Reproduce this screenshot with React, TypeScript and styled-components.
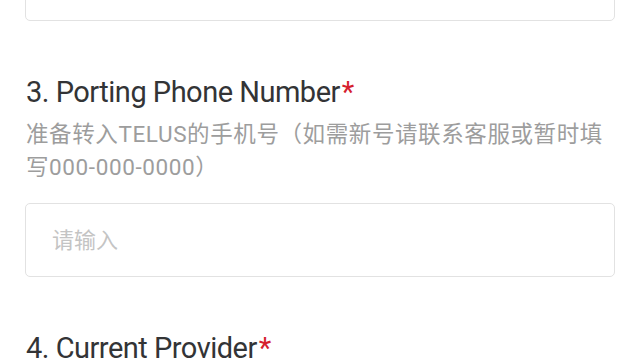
import React from "react";
import styled, { createGlobalStyle } from "styled-components";

const Global = createGlobalStyle`
  html, body { margin: 0; padding: 0; background: #ffffff; }
  body { font-family: Roboto, "Noto Sans CJK SC", sans-serif; overflow: hidden; }
`;

const Page = styled.div`
  width: 640px;
  height: 360px;
  overflow: hidden;
  box-sizing: border-box;
  padding: 0 25px 0 25px;
  background: #ffffff;
`;

const Field = styled.div`
  display: flex;
  flex-direction: column;
  padding-top: 51px;
`;

const Title = styled.div`
  font-family: Roboto, "Noto Sans CJK SC", sans-serif;
  font-size: 29px;
  line-height: 40px;
  color: #333436;
  letter-spacing: -0.5px;
  margin-left: 1px;
`;

const Star = styled.span`
  color: #d5202e;
  margin-left: 2px;
`;

const Hint = styled.div`
  margin-top: 6px;
  font-family: Roboto, "Noto Sans CJK SC", sans-serif;
  font-size: 22.5px;
  line-height: 33px;
  letter-spacing: 0.6px;
  color: #9d9d9d;
  margin-left: 1px;
`;

const Input = styled.input<{ $cut?: boolean }>`
  display: block;
  box-sizing: border-box;
  width: 100%;
  height: 74px;
  margin: ${(p) => (p.$cut ? "-53px 0 0 0" : "19px 0 0 0")};
  padding: 0 26px;
  border: 1.5px solid #e2e2e2;
  border-radius: 5px;
  background: #ffffff;
  font-family: Roboto, "Noto Sans CJK SC", sans-serif;
  font-size: 22px;
  color: #2b2c2e;
  outline: none;
  &::placeholder { color: #c4c4c4; }
`;

export default function App() {
  return (
    <Page>
      <Global />
      <Input $cut aria-label="previous" />
      <Field>
        <Title>
          3. Porting Phone Number<Star>*</Star>
        </Title>
        <Hint>准备转入TELUS的手机号（如需新号请联系客服或暂时填写000-000-0000）</Hint>
        <Input placeholder="请输入" />
      </Field>
      <Field>
        <Title>
          4. Current Provider<Star>*</Star>
        </Title>
      </Field>
    </Page>
  );
}
